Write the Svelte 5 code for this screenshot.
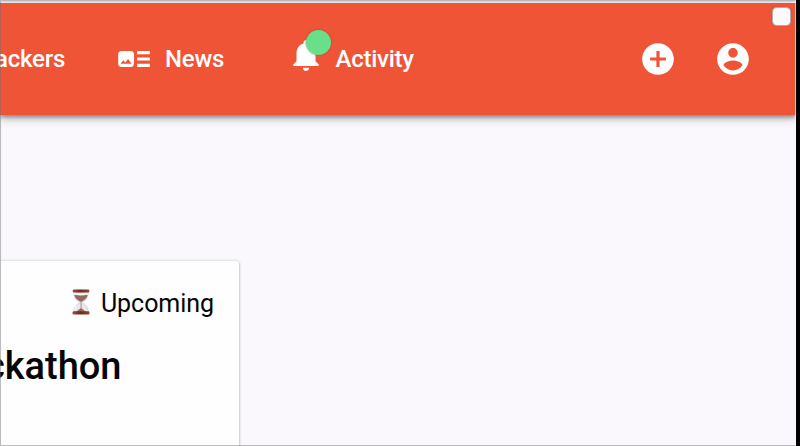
<script>
  const nav = [
    { label: 'Hackers', kind: 'plain' },
    { label: 'News', kind: 'news' },
    { label: 'Activity', kind: 'activity' }
  ];
</script>

<div class="screen">
  <div class="page">
    <header class="bar">
      <nav>
        {#each nav as item}
          <a class={item.kind}>
            {#if item.kind === 'news'}
              <svg class="icon" viewBox="0 0 24 24"><path d="M22 13h-8v-2h8v2zm0-6h-8v2h8V7zm-8 10h8v-2h-8v2zm-2-8v6c0 1.1-.9 2-2 2H4c-1.1 0-2-.9-2-2V9c0-1.1.9-2 2-2h6c1.1 0 2 .9 2 2zm-1.5 6l-2.25-3-1.75 2.26-1.25-1.51L3.5 15h7z" /></svg>
            {:else if item.kind === 'activity'}
              <span class="bell">
                <svg class="icon" viewBox="0 0 24 24"><path d="M12 22c1.1 0 2-.9 2-2h-4c0 1.1.89 2 2 2zm6-6v-5c0-3.07-1.64-5.64-4.5-6.32V4c0-.83-.67-1.5-1.5-1.5s-1.5.67-1.5 1.5v.68C7.63 5.36 6 7.92 6 11v5l-2 2v1h16v-1l-2-2z" /></svg>
                <i class="badge"></i>
              </span>
            {/if}
            <span class="label">{item.label}</span>
          </a>
        {/each}
      </nav>
      <div class="actions">
        <svg class="icon" viewBox="0 0 24 24"><path d="M12 2C6.48 2 2 6.48 2 12s4.48 10 10 10 10-4.48 10-10S17.52 2 12 2zm5 11h-4v4h-2v-4H7v-2h4V7h2v4h4v2z" /></svg>
        <svg class="icon" viewBox="0 0 24 24"><path d="M12 2C6.48 2 2 6.48 2 12s4.48 10 10 10 10-4.48 10-10S17.52 2 12 2zm0 3c1.66 0 3 1.34 3 3s-1.34 3-3 3-3-1.34-3-3 1.34-3 3-3zm0 14.2c-2.5 0-4.71-1.28-6-3.22.03-1.99 4-3.08 6-3.08 1.99 0 5.97 1.09 6 3.08-1.29 1.94-3.5 3.22-6 3.22z" /></svg>
      </div>
    </header>
    <article class="card">
      <div class="status">
        <svg class="hourglass" viewBox="0 0 18 26">
          <defs>
            <linearGradient id="wood" x1="0" x2="1" y1="0" y2="0">
              <stop offset="0" stop-color="#a34e2b" />
              <stop offset=".45" stop-color="#60301f" />
              <stop offset="1" stop-color="#94472a" />
            </linearGradient>
          </defs>
          <path d="M1.800 3h14.400c0 5-2 8.500-6 10v1c4 1.500 6 5 6 9H1.800c0-4 2-7.500 6-9v-1c-4-1.500-6-5-6-10z" fill="#e6eaee" stroke="#b9bec4" stroke-width=".5" />
          <path d="M2.300 5.800h13.400c-.6 3.200-2.600 5.200-5.900 6.600H8.200C4.900 11 2.900 9 2.300 5.800z" fill="#95695a" />
          <path d="M2 4.100q7 1.800 14 0v1.500q-7 1.800-14 0z" fill="#f0f3f6" />
          <path d="M8.700 12h.7v7.200l4.900 3.800H3.700l5-3.800z" fill="#a86543" />
          <rect x=".7" y=".6" width="16.600" height="2.900" rx="1.200" fill="url(#wood)" />
          <rect x=".5" y="22.300" width="17" height="3.200" rx="1.300" fill="url(#wood)" />
          <path d="M4.300 16.500q-1.300 2-1.300 4.500" stroke="#fff" fill="none" />
        </svg>
        <span>Upcoming</span>
      </div>
      <h2>Hackathon</h2>
    </article>
    <i class="check"></i>
  </div>
</div>

<style>
  :global(body) { background: #000; overflow: hidden; }
  .screen {
    width: 800px;
    height: 446px;
    box-sizing: border-box;
    padding-right: 4px;
    background: #000;
    overflow: hidden;
    font-family: Roboto, sans-serif;
  }
  .page {
    position: relative;
    box-sizing: border-box;
    width: 796px;
    height: 446px;
    padding-top: 3px;
    background: #faf8fc;
    overflow: hidden;
  }
  .page::after {
    content: '';
    position: absolute;
    inset: 0;
    border: 1px solid rgba(110, 110, 115, .45);
    border-right-color: rgba(255, 255, 255, .6);
    box-shadow: inset 0 1px 1px rgba(120, 120, 130, .25);
    pointer-events: none;
  }
  .bar {
    position: relative;
    display: flex;
    justify-content: space-between;
    box-sizing: border-box;
    height: 112px;
    padding-right: 44px;
    background: #ef5437;
    color: #fff;
    box-shadow: 0 2px 4px rgba(0, 0, 0, .35), 0 4px 9px rgba(0, 0, 0, .22);
  }
  nav, nav a, .actions { display: flex; align-items: center; }
  nav a {
    font-size: 24px;
    font-weight: 500;
    line-height: 28px;
    letter-spacing: -.25px;
    white-space: nowrap;
  }
  .plain { width: 65px; justify-content: flex-end; }
  .news { width: 172px; margin-left: 50px; }
  .news .label { margin-left: 12px; }
  .activity .label { margin-left: 11px; }
  .icon { display: block; flex: none; width: 38px; height: 38px; fill: currentColor; }
  .bell { position: relative; margin-bottom: 9px; margin-left: -.5px; }
  .badge {
    position: absolute;
    left: 19px;
    top: -6px;
    width: 25px;
    height: 25px;
    border-radius: 50%;
    background: #67df8b;
    box-shadow: 0 0 1px 1px rgba(110, 100, 50, .3);
  }
  .actions { gap: 37px; }
  .card {
    box-sizing: border-box;
    width: 239px;
    height: 200px;
    margin-top: 145.500px;
    padding: 26.500px 25px 0 0;
    border-radius: 0 3px 0 0;
    background: #fefdff;
    box-shadow: 0 0 3px rgba(0, 0, 0, .22), 1px 1px 2px rgba(0, 0, 0, .1);
    color: #050505;
  }
  .status {
    display: flex;
    justify-content: flex-end;
    align-items: center;
    gap: 10px;
    height: 34px;
    font-size: 25px;
    line-height: 34px;
    letter-spacing: -.05px;
  }
  .hourglass { width: 18px; height: 26px; margin-bottom: 5px; margin-right: 1px; }
  h2 {
    display: flex;
    justify-content: flex-end;
    width: 121.500px;
    margin: 22px 0 0;
    font-size: 38px;
    font-weight: 500;
    line-height: 47px;
  }
  .check {
    position: absolute;
    left: 772px;
    top: 7px;
    box-sizing: border-box;
    width: 19px;
    height: 19px;
    border: 1px solid #b5aaa8;
    border-radius: 4.500px;
    background: #faf9fb;
    box-shadow: 0 0 1px rgba(80, 50, 40, .6);
  }
</style>
